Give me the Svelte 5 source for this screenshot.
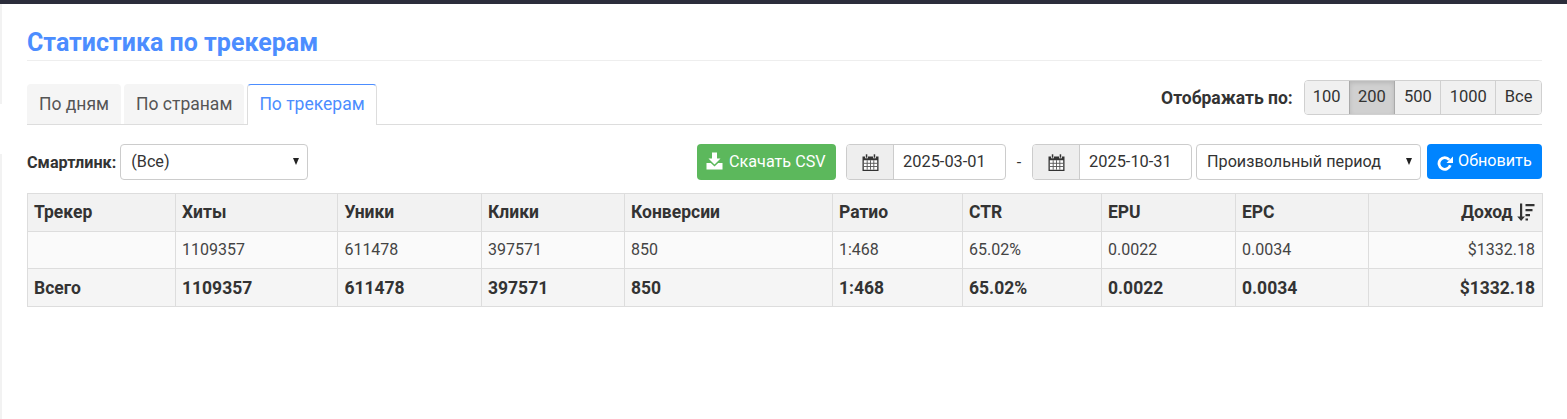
<script>
	const tabs = [
		{ label: "По дням" },
		{ label: "По странам" },
		{ label: "По трекерам", active: true }
	];
	const pageSizes = ["100", "200", "500", "1000", "Все"];
	const columns = [
		{ key: "Трекер", width: 148 },
		{ key: "Хиты", width: 162.4 },
		{ key: "Уники", width: 143.6 },
		{ key: "Клики", width: 143 },
		{ key: "Конверсии", width: 208 },
		{ key: "Ратио", width: 130 },
		{ key: "CTR", width: 139 },
		{ key: "EPU", width: 134 },
		{ key: "EPC", width: 133 },
		{ key: "Доход", width: 174 }
	];
	const row = ["", "1109357", "611478", "397571", "850", "1:468", "65.02%", "0.0022", "0.0034", "$1332.18"];
	const total = ["Всего", ...row.slice(1)];
</script>

{#snippet calendar()}
	<svg class="cal" viewBox="0 0 17 17" width="17" height="17">
		<path fill="#333" d="M0.500 2.500h2.500v1.800h3V2.500h5v1.800h3V2.500h2.500V17H0.500z"/>
		<rect x="3.800" y="0.300" width="1.500" height="3.400" fill="#333"/>
		<rect x="11.700" y="0.300" width="1.500" height="3.400" fill="#333"/>
		<path fill="#fff" d="M1.800 6.200h13.400v9.500H1.800z"/>
		<path stroke="#555" stroke-width=".9" d="M5.200 6.200v9.500M8.500 6.200v9.500M11.800 6.200v9.500M1.800 9.300h13.400M1.800 12.500h13.400"/>
	</svg>
{/snippet}

<div class="top-bar"></div>
<div class="shell">
	<div class="rail">
		<span class="upper"></span>
		<span class="lower"></span>
	</div>
	<div class="page">
		<h1>Статистика по трекерам</h1>

		<div class="tabs-row">
			<ul class="tabs">
				{#each tabs as tab}
					<li class:active={tab.active}>{tab.label}</li>
				{/each}
			</ul>
			<div class="page-size">
				<b>Отображать по:</b>
				<div class="btn-group">
					{#each pageSizes as size}
						<span class:on={size === "200"}>{size}</span>
					{/each}
				</div>
			</div>
		</div>

		<div class="filters">
			<label class="smartlink">
				<b>Смартлинк:</b>
				<span class="select smart">(Все)<i class="caret"></i></span>
			</label>
			<div class="right">
				<button class="csv">
					<svg viewBox="0 0 17 18" width="17" height="18">
						<path fill="#fff" d="M6 0.500h5v6h3.500L8.500 12.500l-6-6H6z"/>
						<path fill="#fff" d="M0.500 11h4.300l3.700 3.500L12.200 11h4.300v6.500H0.500z"/>
					</svg>
					Скачать CSV
				</button>
				<div class="date first">
					<span class="addon">{@render calendar()}</span>
					<span class="value">2025-03-01</span>
				</div>
				<span class="dash">-</span>
				<div class="date">
					<span class="addon">{@render calendar()}</span>
					<span class="value">2025-10-31</span>
				</div>
				<span class="select period">Произвольный период<i class="caret"></i></span>
				<button class="refresh">
					<svg viewBox="0 0 16 16" width="16" height="16">
						<path fill="none" stroke="#fff" stroke-width="2.800" d="M13.300 10.300a5.800 5.800 0 1 1-1-5.500"/>
						<path fill="#fff" d="M16 1.500v6.500H9.500z"/>
					</svg>
					Обновить
				</button>
			</div>
		</div>

		<table>
			<colgroup>
				{#each columns as col}
					<col style="width: {col.width}px" />
				{/each}
			</colgroup>
			<thead>
				<tr>
					{#each columns as col, index}
						<th class:num={index === columns.length - 1}>
							{col.key}
							{#if index === columns.length - 1}
								<svg class="sort" viewBox="0 0 18 18" width="18" height="18">
									<path fill="#333" d="M3 0.500h2.200v13H8l-3.900 4.500-3.900-4.500H3z"/>
									<path fill="#333" d="M8.500 1h9v2.200h-9zM8.500 6h7v2.200h-7zM8.500 11h4.500v2.200H8.500zM8.500 15.500H11v2H8.500z"/>
								</svg>
							{/if}
						</th>
					{/each}
				</tr>
			</thead>
			<tbody>
				<tr class="data">
					{#each row as cell, index}
						<td class:num={index === row.length - 1}>{cell}</td>
					{/each}
				</tr>
				<tr class="total">
					{#each total as cell, index}
						<td class:num={index === total.length - 1}>{cell}</td>
					{/each}
				</tr>
			</tbody>
		</table>
	</div>
</div>

<style>
	:global(body) {
		margin: 0;
		background: #fff;
		font-family: Roboto, sans-serif;
		font-size: 16px;
		color: #333;
	}

	.top-bar {
		height: 4px;
		background: #2b2d3b;
	}

	.shell {
		display: flex;
		height: 415px;
		overflow: hidden;
	}

	.rail {
		display: flex;
		flex-direction: column;
		gap: 50px;
		width: 2px;
		flex: none;
	}

	.rail span {
		display: block;
		background: #f2f2f2;
	}

	.rail .upper {
		height: 100px;
	}

	.rail .lower {
		flex: 1;
	}

	.page {
		flex: 1;
		min-width: 0;
		padding: 0 25px;
	}

	h1 {
		margin: 25px 0 0;
		padding-bottom: 4px;
		font-size: 25px;
		line-height: 27px;
		font-weight: 700;
		color: #4c8dff;
		border-bottom: 1px solid #eee;
	}

	.tabs-row {
		display: flex;
		justify-content: space-between;
		align-items: flex-start;
		margin-top: 19px;
		border-bottom: 1px solid #ddd;
		height: 40px;
		padding-top: 4px;
	}

	.tabs {
		display: flex;
		gap: 3px;
		list-style: none;
		margin: 0;
		padding: 0;
	}

	.tabs li {
		height: 40px;
		padding: 0 12px;
		line-height: 40px;
		font-size: 17.5px;
		color: #555;
		background: #f5f5f5;
		border-radius: 4px 4px 0 0;
		box-sizing: border-box;
	}

	.tabs li.active {
		height: 41px;
		color: #4c8dff;
		background: #fff;
		border: 1px solid #ddd;
		border-top-color: #4c8dff;
		border-bottom: 0;
		line-height: 39px;
		padding: 0 11px;
	}

	.page-size {
		display: flex;
		align-items: center;
		gap: 11px;
		margin-top: -4px;
		font-size: 17.5px;
	}

	.page-size b {
		color: #333;
	}

	.btn-group {
		display: flex;
		border: 1px solid #d0d0d0;
		border-radius: 4px;
		overflow: hidden;
	}

	.btn-group span {
		height: 33px;
		padding: 0 8.5px;
		line-height: 32px;
		font-size: 16.5px;
		background: #f0f0f0;
		border-left: 1px solid #d0d0d0;
	}

	.btn-group span:first-child {
		border-left: 0;
		padding: 0 8px;
	}

	.btn-group span.on {
		background: #d0d0d0;
		border-left-color: #aaa;
		border-right: 1px solid #aaa;
		box-shadow: inset 0 2px 4px rgba(0, 0, 0, 0.12);
	}

	.btn-group span.on + span {
		border-left: 0;
	}

	.filters {
		display: flex;
		justify-content: space-between;
		align-items: center;
		margin-top: 19px;
		height: 36px;
	}

	.smartlink {
		display: flex;
		align-items: center;
		gap: 4px;
		font-size: 16.2px;
	}

	.select {
		position: relative;
		display: block;
		height: 36px;
		padding-left: 10px;
		line-height: 34px;
		font-size: 16.2px;
		color: #333;
		background: #fff;
		border: 1px solid #ccc;
		border-radius: 4px;
		box-sizing: border-box;
	}

	.smart {
		width: 188px;
	}

	.period {
		width: 225px;
	}

	.caret {
		position: absolute;
		right: 8px;
		top: 13px;
		border: 3px solid transparent;
		border-top: 7px solid #222;
		border-bottom: 0;
	}

	.right {
		display: flex;
		align-items: center;
	}

	button {
		display: flex;
		align-items: center;
		height: 36px;
		border: 0;
		border-radius: 4px;
		color: #fff;
		font: 400 16.2px Roboto, sans-serif;
		padding: 0;
	}

	.csv {
		width: 139px;
		gap: 6px;
		padding-left: 9px;
		padding-bottom: 2px;
		background: #5cb85c;
		margin-right: 10px;
	}

	.refresh {
		width: 115px;
		height: 35px;
		align-self: flex-start;
		gap: 5px;
		padding-left: 10px;
		padding-bottom: 2px;
		background: #0084ff;
		margin-left: 6px;
	}

	.refresh svg {
		margin-top: 4px;
	}

	.date {
		display: flex;
		height: 36px;
		width: 160px;
		box-sizing: border-box;
		border: 1px solid #ccc;
		border-radius: 4px;
		overflow: hidden;
		font-size: 16.4px;
	}

	.addon {
		display: flex;
		align-items: center;
		justify-content: center;
		width: 46px;
		background: #eee;
		border-right: 1px solid #ccc;
	}

	.value {
		padding-left: 9px;
		line-height: 34px;
	}

	.dash {
		width: 26px;
		text-align: center;
	}

	.date + .select {
		margin-left: 4px;
	}

	table {
		width: 100%;
		margin-top: 13px;
		border-collapse: collapse;
		table-layout: fixed;
		font-size: 16px;
	}

	th,
	td {
		border: 1px solid #ddd;
		padding: 0 6px;
		text-align: left;
	}

	th {
		height: 35px;
		padding-bottom: 2px;
		font-size: 17.5px;
		font-weight: 700;
		background: #f2f2f2;
		color: #333;
	}

	.data td {
		height: 34px;
		padding-bottom: 2px;
		background: #fafafa;
		color: #444;
	}

	.total td {
		height: 37px;
		font-size: 17.5px;
		font-weight: 700;
		background: #f5f5f5;
		color: #333;
	}

	.num {
		text-align: right;
		padding-right: 7px;
	}

	.sort {
		vertical-align: -3px;
	}
</style>
